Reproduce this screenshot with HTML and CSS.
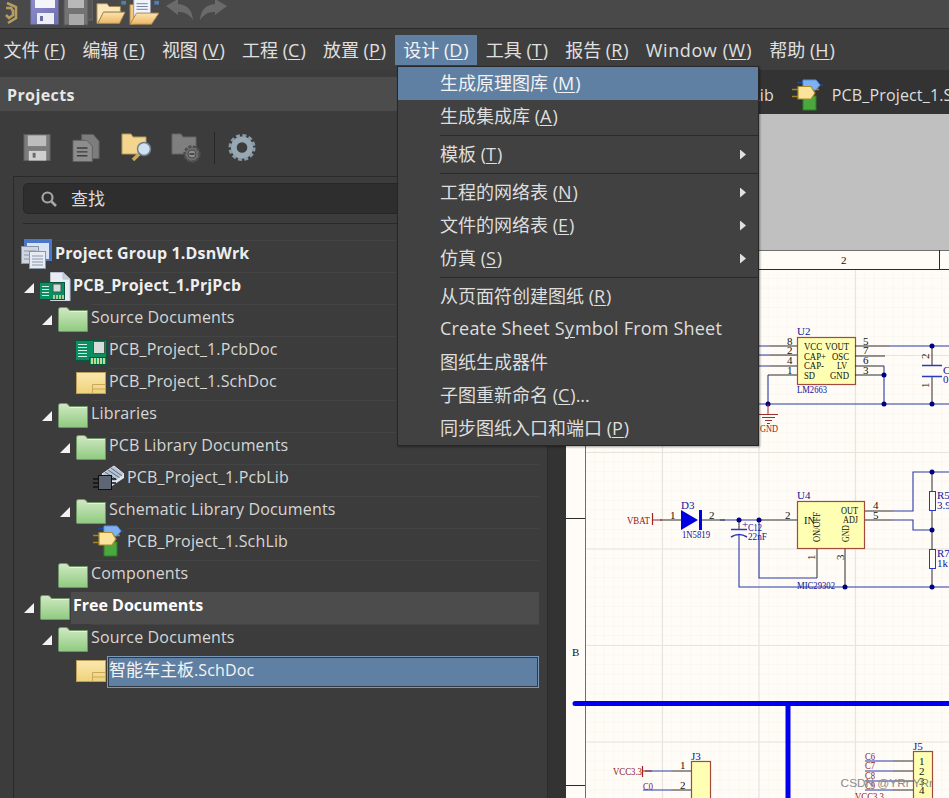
FILE: index.html
```html
<!DOCTYPE html>
<html lang="zh">
<head>
<meta charset="utf-8">
<title>Altium Designer</title>
<link rel="stylesheet" href="styles.css">
</head>
<body>
<svg class="defs" aria-hidden="true">
  <defs>
    <linearGradient id="gFolder" x1="0" y1="0" x2="0" y2="1"><stop offset="0" stop-color="#d2e8c4"/><stop offset="1" stop-color="#8ecb80"/></linearGradient>
    <linearGradient id="gSch" x1="0" y1="0" x2="0" y2="1"><stop offset="0" stop-color="#f9e8ae"/><stop offset="1" stop-color="#efd27a"/></linearGradient>
    <linearGradient id="gOpen" x1="0" y1="0" x2="0" y2="1"><stop offset="0" stop-color="#fbe3ad"/><stop offset="1" stop-color="#eeb766"/></linearGradient>
    <linearGradient id="gDisk" x1="0" y1="0" x2="1" y2="1"><stop offset="0" stop-color="#8f8fd0"/><stop offset="1" stop-color="#6f6fb0"/></linearGradient>
    <symbol id="i-folder" viewBox="0 0 32 32">
      <path d="M1.5 8.5 Q1.5 6.5 3.5 6.5 H9 Q11 6.5 12.5 9.5 H30.5 V30.5 H2.5 Q1.5 30.5 1.5 29.5 Z" fill="url(#gFolder)" stroke="#6f9566" stroke-width="1"/>
      <path d="M12.5 10.5 H30" stroke="#e6f3dc" stroke-width="1"/>
    </symbol>
    <symbol id="i-sch" viewBox="0 0 32 32">
      <rect x="1.5" y="7.5" width="29" height="21" fill="url(#gSch)" stroke="#bd9f5c"/>
      <path d="M17.5 28.5 V19.5 H30.5 M17.5 24 H30.5" fill="none" stroke="#c9a75c"/>
    </symbol>
    <symbol id="i-pcb" viewBox="0 0 32 32">
      <rect x="0.5" y="7.5" width="31" height="20" fill="#0a8f62" stroke="#06563c"/>
      <path d="M3 11.5 H12 M3 14.5 H12 M3 17.5 H12 M3 20.5 H12 M3 23.5 H12" stroke="#d6efe4" stroke-width="1.2"/>
      <rect x="18.5" y="8.5" width="11" height="12" fill="#d8dcd8" stroke="#41594f"/>
      <rect x="14.5" y="24.5" width="17" height="7" fill="#0a8f62" stroke="#06563c"/>
      <path d="M17 25 V31 M20 25 V31 M23 25 V31 M26 25 V31 M29 25 V31" stroke="#f3e9a8" stroke-width="1.6"/>
    </symbol>
    <symbol id="i-project" viewBox="0 0 32 32">
      <path d="M11.5 3.5 H24 L31 10 V32 H11.5 Z" fill="#e8ecf5" stroke="#b9c0cf"/>
      <path d="M24 3.5 V10 H31" fill="#c5cbd9" stroke="#b9c0cf"/>
      <rect x="0.5" y="13.5" width="25" height="17" fill="#0a8f62" stroke="#06563c"/>
      <path d="M3 17.5 H10 M3 20.5 H10 M3 23.5 H10 M3 26.5 H10" stroke="#d6efe4"/>
      <rect x="14" y="15" width="8" height="8" fill="#d8dcd8" stroke="#41594f"/>
      <path d="M15 26 V30 M18 26 V30 M21 26 V30 M24 26 V30" stroke="#f3e9a8" stroke-width="1.4"/>
    </symbol>
    <symbol id="i-group" viewBox="0 0 32 32">
      <rect x="3" y="2" width="28" height="22" fill="#4a78c8"/>
      <rect x="6" y="6" width="22" height="16" fill="#d9e3f3"/>
      <rect x="0.5" y="9.5" width="17" height="17" fill="#cfd6e2" stroke="#8895aa"/>
      <path d="M3 14 H15 M3 18 H15 M3 22 H15" stroke="#8b97ab"/>
      <rect x="8.5" y="14.5" width="16" height="17" fill="#e7ebf2" stroke="#8895aa"/>
      <path d="M11 19 H22 M11 22 H22 M11 25 H22 M11 28 H22" stroke="#8b97ab"/>
    </symbol>
    <symbol id="i-pcblib" viewBox="0 0 32 32">
      <path d="M9 13 L21 5 L31 13 L21 21 Z" fill="#b7c4d6" stroke="#e4e9f0"/>
      <path d="M12 11 L24 19 M15 9 L27 17 M18 7 L29 15" stroke="#5f6d80"/>
      <path d="M9 13 V18 L19 25 L31 17 V13 L21 21 Z" fill="#e3e8ee"/>
      <rect x="5.5" y="14.5" width="13" height="14" fill="#5d6672" stroke="#111"/>
      <path d="M0 18 H5 M0 22 H5 M0 26 H5 M19 18 H23 M19 22 H23" stroke="#111" stroke-width="1.4"/>
    </symbol>
    <symbol id="i-schlib" viewBox="0 0 32 32">
      <rect x="11" y="17" width="13" height="14" fill="#4aa83e" stroke="#2f7d28"/>
      <path d="M5 3.5 H24 M26 6 H31" stroke="#1a4aa5" stroke-width="1.4"/>
      <path d="M11 1 H24 L28 6 L24 11 H11 Z" fill="#7fb2f5" stroke="#5d8fd6"/>
      <path d="M0 10.5 H6 M0 17.5 H6 M24 10.5 H27" stroke="#a08420" stroke-width="1.6"/>
      <path d="M6 7.5 H19 L23 14 L19 20 H6 Z" fill="#fbe39c" stroke="#a98c2c" stroke-width="1.2"/>
    </symbol>
  </defs>
</svg>

<div class="app">
  <div class="toolbar">
    <svg class="tb-icon tb-logo" viewBox="0 0 16 28"><path d="M4 3 L13 7 V18 L5 23 M3 8 H8 L10 11 V15 L6 18 L3 15" fill="none" stroke="#b59d62" stroke-width="2.6"/></svg>
    <svg class="tb-icon tb-wide" viewBox="0 0 30 28"><rect x="1" y="-4" width="27" height="28" fill="url(#gDisk)" stroke="#7a7ab8"/><rect x="5" y="-4" width="20" height="12" fill="#f4f4fb"/><rect x="7" y="13" width="17" height="11" fill="#eeeef6"/><rect x="10" y="16" width="3" height="5" fill="#6d6da0"/></svg>
    <svg class="tb-icon tb-wide" viewBox="0 0 30 28"><rect x="7" y="-6" width="23" height="26" fill="#565656" stroke="#6c6c6c"/><rect x="1" y="-2" width="24" height="27" fill="#737373" stroke="#575757"/><rect x="5" y="-2" width="16" height="10" fill="#b8b8b8"/><rect x="6" y="14" width="15" height="11" fill="#a9a9a9"/></svg>
    <svg class="tb-icon tb-wide" viewBox="0 0 32 28"><path d="M1 3 H12 L14 6 H26 V12 H8 L2 24 H1 Z" fill="#fbe7b8" stroke="#a18a5a"/><path d="M8 12 H31 L25 24 H2 Z" fill="url(#gOpen)" stroke="#a18a5a"/><rect x="27" y="0" width="5" height="4" fill="#4f81ad"/></svg>
    <svg class="tb-icon tb-wide" viewBox="0 0 32 28"><path d="M1 4 H6 V25 H1 Z" fill="#f3c885" stroke="#a5824c"/><rect x="5" y="-3" width="18" height="22" fill="#f0f3fa" stroke="#8c96aa"/><path d="M8 3 H20 M8 6 H20 M8 9 H20" stroke="#6f7f9f"/><path d="M8 13 H32 L24 25 H1 Z" fill="url(#gOpen)" stroke="#a5824c"/><rect x="27" y="0" width="5" height="4" fill="#4f81ad"/></svg>
    <svg class="tb-icon tb-wide tb-undo" viewBox="0 0 30 28"><path d="M1 6 L13 -1 V4 Q27 5 28 20 Q22 11 13 12 V15 Z" fill="#6a6a6a"/></svg>
    <svg class="tb-icon tb-wide" viewBox="0 0 30 28"><path d="M29 6 L17 -1 V4 Q3 5 2 20 Q8 11 17 12 V15 Z" fill="#6a6a6a"/></svg>
  </div>

  <nav class="menubar">
    <span class="menu-top">文件 (<u>F</u>)</span>
    <span class="menu-top">编辑 (<u>E</u>)</span>
    <span class="menu-top">视图 (<u>V</u>)</span>
    <span class="menu-top">工程 (<u>C</u>)</span>
    <span class="menu-top">放置 (<u>P</u>)</span>
    <span class="menu-top is-open">设计 (<u>D</u>)</span>
    <span class="menu-top">工具 (<u>T</u>)</span>
    <span class="menu-top">报告 (<u>R</u>)</span>
    <span class="menu-top menu-latin">Window (<u>W</u>)</span>
    <span class="menu-top">帮助 (<u>H</u>)</span>
  </nav>

  <div class="main">
    <aside class="panel">
      <header class="panel-head">Projects</header>
      <div class="panel-tools">
        <svg class="pt-icon" viewBox="0 0 30 30"><rect x="1" y="1" width="27" height="27" fill="#7b7b7b" stroke="#5f5f5f"/><rect x="5" y="2" width="19" height="11" fill="#bdbdbd"/><rect x="6" y="18" width="18" height="10" fill="#d0d0d0"/><rect x="10" y="20" width="3" height="5" fill="#6a6a6a"/></svg>
        <svg class="pt-icon" viewBox="0 0 30 30"><path d="M10 1 H22 L28 8 V26 H10 Z" fill="#7d7d7d" stroke="#5f5f5f"/><path d="M1 7 H15 L21 13 V29 H1 Z" fill="#8d8d8d" stroke="#5f5f5f"/><path d="M5 15 H16 M5 19 H16 M5 23 H16" stroke="#3e3e3e" stroke-width="1.5"/></svg>
        <svg class="pt-icon pt-wide" viewBox="0 0 32 30"><path d="M1 1 H10 L12 4 H25 V21 H1 Z" fill="#f3d58d" stroke="#b49a5e"/><path d="M12 27 L18 21" stroke="#c7a860" stroke-width="3.5"/><circle cx="23" cy="16" r="6.5" fill="#cfe1f0" stroke="#6d7f8f" stroke-width="1.5"/></svg>
        <svg class="pt-icon pt-wide" viewBox="0 0 32 30"><path d="M1 1 H10 L12 4 H25 V21 H1 Z" fill="#7f7f7f" stroke="#646464"/><circle cx="21" cy="21" r="7.5" fill="#6d6d6d" stroke="#4e4e4e" stroke-width="2.5" stroke-dasharray="3 1.5"/><circle cx="21" cy="21" r="4" fill="#8e8e8e" stroke="#4a4a4a"/><path d="M18.5 21 H23.5" stroke="#333" stroke-width="1.5"/></svg>
        <span class="pt-sep"></span>
        <svg class="pt-icon" viewBox="0 0 30 30"><circle cx="14.5" cy="14.5" r="8.5" fill="none" stroke="#97a8b5" stroke-width="6"/><circle cx="14.5" cy="14.5" r="12.5" fill="none" stroke="#8b9aa6" stroke-width="3" stroke-dasharray="4 2.55"/></svg>
      </div>
      <div class="frame">
        <div class="search">
          <svg class="search-icon" viewBox="0 0 18 18"><circle cx="7.5" cy="7.5" r="5" fill="none" stroke="#a6a6a6" stroke-width="2.2"/><path d="M11.5 11.5 L16 16" stroke="#a6a6a6" stroke-width="2.6"/></svg>
          <span>查找</span>
        </div>
        <div class="rule"></div>
        <ul class="tree">
          <li class="row lv0"><svg class="icon"><use href="#i-group"/></svg><span class="label bold">Project Group 1.DsnWrk</span></li>
          <li class="row lv1"><i class="tri"></i><svg class="icon"><use href="#i-project"/></svg><span class="label bold">PCB_Project_1.PrjPcb</span></li>
          <li class="row lv2"><i class="tri"></i><svg class="icon"><use href="#i-folder"/></svg><span class="label">Source Documents</span></li>
          <li class="row lv3"><i class="tri-gap"></i><svg class="icon"><use href="#i-pcb"/></svg><span class="label">PCB_Project_1.PcbDoc</span></li>
          <li class="row lv3"><i class="tri-gap"></i><svg class="icon"><use href="#i-sch"/></svg><span class="label">PCB_Project_1.SchDoc</span></li>
          <li class="row lv2"><i class="tri"></i><svg class="icon"><use href="#i-folder"/></svg><span class="label">Libraries</span></li>
          <li class="row lv3"><i class="tri"></i><svg class="icon"><use href="#i-folder"/></svg><span class="label">PCB Library Documents</span></li>
          <li class="row lv4"><i class="tri-gap"></i><svg class="icon"><use href="#i-pcblib"/></svg><span class="label">PCB_Project_1.PcbLib</span></li>
          <li class="row lv3"><i class="tri"></i><svg class="icon"><use href="#i-folder"/></svg><span class="label">Schematic Library Documents</span></li>
          <li class="row lv4"><i class="tri-gap"></i><svg class="icon"><use href="#i-schlib"/></svg><span class="label">PCB_Project_1.SchLib</span></li>
          <li class="row lv2"><i class="tri-gap"></i><svg class="icon"><use href="#i-folder"/></svg><span class="label">Components</span></li>
          <li class="row lv1"><i class="tri"></i><svg class="icon"><use href="#i-folder"/></svg><span class="label bold hover">Free Documents</span></li>
          <li class="row lv2"><i class="tri"></i><svg class="icon"><use href="#i-folder"/></svg><span class="label">Source Documents</span></li>
          <li class="row lv3"><i class="tri-gap"></i><svg class="icon"><use href="#i-sch"/></svg><span class="label selected"><span class="cjk">智能车主板</span>.SchDoc</span></li>
        </ul>
      </div>
    </aside>

    <section class="doc">
      <div class="tabs">
        <span class="tab"><svg class="tab-icon"><use href="#i-pcblib"/></svg>PCB_Project_1.PcbLib</span>
        <span class="tab"><svg class="tab-icon"><use href="#i-schlib"/></svg>PCB_Project_1.SchDoc</span>
      </div>
      <div class="outside"></div>
      <svg class="sheet" viewBox="566 250 383 548">
        <defs>
          <pattern id="fine" x="566" y="250" width="9.65" height="9.65" patternUnits="userSpaceOnUse"><path d="M9.65 0 V9.65 H0" fill="none" stroke="#f6f3ec" stroke-width="1"/></pattern>
        </defs>
        <rect x="566" y="250" width="383" height="548" fill="#fffcf7"/>
        <rect x="586" y="270" width="363" height="528" fill="url(#fine)"/>
        <g stroke="#e6e4dd" stroke-width="1.2">
          <path d="M662.5 270 V798 M759 270 V798 M855.5 270 V798 M586 355.5 H949 M586 452.5 H949 M586 549 H949 M586 645.5 H949 M586 742 H949"/>
        </g>
        <g stroke="#6f6f6f" stroke-width="1">
          <path d="M566 250.5 H949 M585.5 270 V798"/>
        </g>
        <path d="M566 269.5 H949 M939.5 250 V270 M566 518.5 H585 M566 785.5 H585" stroke="#2a2a2a" stroke-width="1"/>
        <text class="s-txt s-black" x="841" y="264">2</text>
        <text class="s-txt s-black" x="572" y="656">B</text>

        <!-- U2 -->
        <g class="wire"><path d="M759 346 H770 M759 355 H770 M759 366 H770 M890 346 H949 M884 366 V404 M759 404 H949 M768 375 V404"/></g>
        <rect x="797.5" y="337.5" width="58" height="47" class="part"/>
        <g class="pin"><path d="M770 346 H797 M770 355 H797 M770 366 H797 M768 375 H797 M855 346 H890 M855 356 H885 M855 366 H884 M855 375 H884 M932 346 V365 M932 376 V404"/></g>
        <g class="s-txt s-black">
          <text x="804" y="350" textLength="18" lengthAdjust="spacingAndGlyphs">VCC</text><text x="825" y="350" textLength="24" lengthAdjust="spacingAndGlyphs">VOUT</text>
          <text x="804" y="360" textLength="22" lengthAdjust="spacingAndGlyphs">CAP+</text><text x="832" y="360" textLength="17" lengthAdjust="spacingAndGlyphs">OSC</text>
          <text x="804" y="369" textLength="20" lengthAdjust="spacingAndGlyphs">CAP-</text><text x="837" y="369" textLength="10" lengthAdjust="spacingAndGlyphs">LV</text>
          <text x="804" y="379" textLength="11" lengthAdjust="spacingAndGlyphs">SD</text><text x="830" y="379" textLength="19" lengthAdjust="spacingAndGlyphs">GND</text>
          <text x="787" y="345">8</text><text x="787" y="354">2</text><text x="787" y="364">4</text><text x="787" y="374">1</text>
          <text x="863" y="345">5</text><text x="863" y="354">7</text><text x="863" y="364">6</text><text x="863" y="374">3</text>
          <text transform="translate(929 359) rotate(-90)">2</text>
          <text transform="translate(929 388) rotate(-90)">1</text>
        </g>
        <text class="s-txt s-blue" x="797" y="335">U2</text>
        <text class="s-txt s-blue" x="797" y="393" textLength="30" lengthAdjust="spacingAndGlyphs">LM2663</text>
        <path d="M922 365.5 H942 M922 376.5 H942" stroke="#2a3ac0" stroke-width="1.4"/>
        <text class="s-txt s-blue" x="943" y="374">C</text><text class="s-txt s-blue" x="943" y="383">0.</text>
        <g class="dot"><circle cx="932" cy="346" r="2.5"/><circle cx="884" cy="375" r="2.5"/><circle cx="884" cy="404" r="2.5"/><circle cx="768" cy="404" r="2.5"/><circle cx="932" cy="404" r="2.5"/></g>
        <path d="M768 404 V414 M759 414.5 H778 M762 417.5 H775 M765 420.5 H772 M767 423.5 H770" stroke="#a03030" stroke-width="1"/>
        <text class="s-txt s-red" x="760" y="432" textLength="18" lengthAdjust="spacingAndGlyphs">GND</text>

        <!-- U4 -->
        <g class="wire"><path d="M720 520 H760 M739 535 V587 H949 M759 520 V578 H817 M893 511 H913 V472 H949 M893 520 H913 V530 H932"/></g>
        <rect x="797.5" y="501.5" width="67" height="47" class="part"/>
        <g class="pin"><path d="M660 520 H681 M701 520 H725 M760 520 H797 M739 520 V529 M817 549 V578 M845 549 V587 M865 511 H893 M865 520 H893 M932 472 V491 M932 510 V549 M932 568 V587"/></g>
        <path d="M652.5 513 V525 M652 520 H662" stroke="#a02020" stroke-width="1.2"/>
        <text class="s-txt s-red" x="627" y="524" textLength="23" lengthAdjust="spacingAndGlyphs">VBAT</text>
        <path d="M681 510 L698 520 L681 530 Z M699 510 H702 V530 H699 Z" fill="#0000e0"/>
        <text class="s-txt s-blue" x="681" y="509">D3</text>
        <text class="s-txt s-blue" x="682" y="538" textLength="28" lengthAdjust="spacingAndGlyphs">1N5819</text>
        <path d="M731 529.5 H747" stroke="#2a3ac0" stroke-width="1.5"/>
        <path d="M731 537 Q739 532 747 537" stroke="#2a3ac0" stroke-width="1.5" fill="none"/>
        <text class="s-txt s-blue" x="742" y="528">+</text>
        <text class="s-txt s-blue" x="748" y="531" textLength="14" lengthAdjust="spacingAndGlyphs">C12</text>
        <text class="s-txt s-blue" x="748" y="540" textLength="19" lengthAdjust="spacingAndGlyphs">22nF</text>
        <g class="s-txt s-black">
          <text x="670" y="519">1</text><text x="709" y="519">2</text><text x="785" y="519">2</text>
          <text x="804" y="524" textLength="11" lengthAdjust="spacingAndGlyphs">IN</text><text x="841" y="514" textLength="17" lengthAdjust="spacingAndGlyphs">OUT</text><text x="843" y="523" textLength="15" lengthAdjust="spacingAndGlyphs">ADJ</text>
          <text x="873" y="509">4</text><text x="873" y="519">5</text>
          <text transform="translate(820 542) rotate(-90)" textLength="30" lengthAdjust="spacingAndGlyphs">ON/OFF</text>
          <text transform="translate(849 542) rotate(-90)" textLength="17" lengthAdjust="spacingAndGlyphs">GND</text>
          <text transform="translate(815 560) rotate(-90)">1</text>
          <text transform="translate(844 560) rotate(-90)">3</text>
        </g>
        <text class="s-txt s-blue" x="797" y="499">U4</text>
        <text class="s-txt s-blue" x="797" y="589" textLength="38" lengthAdjust="spacingAndGlyphs">MIC29302</text>
        <rect x="929.5" y="491.5" width="6" height="19" fill="none" stroke="#2a3ac0"/>
        <rect x="929.5" y="549.5" width="6" height="19" fill="none" stroke="#2a3ac0"/>
        <text class="s-txt s-blue" x="937" y="499">R5</text><text class="s-txt s-blue" x="937" y="509">3.91</text>
        <text class="s-txt s-blue" x="937" y="557">R7</text><text class="s-txt s-blue" x="937" y="567">1k</text>
        <g class="dot"><circle cx="739" cy="520" r="2.5"/><circle cx="759" cy="520" r="2.5"/><circle cx="845" cy="587" r="2.5"/><circle cx="932" cy="587" r="2.5"/><circle cx="932" cy="472" r="2.5"/><circle cx="932" cy="530" r="2.5"/></g>

        <!-- bus -->
        <path d="M575 703.5 H949 M788 703.5 V798" stroke="#0000ee" stroke-width="5" stroke-linecap="round"/>

        <!-- J3 / J5 -->
        <rect x="691.5" y="761.5" width="19" height="60" class="part"/>
        <rect x="913.5" y="751.5" width="19" height="60" class="part"/>
        <g class="wire"><path d="M645 771 H672 M643 790 H672 M865 761 H893 M865 771 H893 M865 781 H893 M865 790 H893"/></g>
        <g class="pin"><path d="M672 771 H691 M672 790 H691 M893 761 H913 M893 771 H913 M893 781 H913 M893 790 H913"/></g>
        <path d="M642.5 766 V777 M642 771 H652" stroke="#a02020" stroke-width="1.2"/>
        <text class="s-txt s-blue" x="691" y="760">J3</text>
        <text class="s-txt s-blue" x="913" y="750">J5</text>
        <text class="s-txt s-red" x="613" y="775" textLength="29" lengthAdjust="spacingAndGlyphs">VCC3.3</text>
        <text class="s-txt s-red" x="643" y="790" textLength="10" lengthAdjust="spacingAndGlyphs">C0</text>
        <g class="s-txt s-red"><text x="865" y="760" textLength="10" lengthAdjust="spacingAndGlyphs">C6</text><text x="865" y="769" textLength="10" lengthAdjust="spacingAndGlyphs">C7</text><text x="865" y="779" textLength="10" lengthAdjust="spacingAndGlyphs">C8</text><text x="865" y="789" textLength="10" lengthAdjust="spacingAndGlyphs">C9</text><text x="855" y="800" textLength="29" lengthAdjust="spacingAndGlyphs">VCC3.3</text></g>
        <g class="s-txt s-black"><text x="919" y="765">1</text><text x="919" y="775">2</text><text x="919" y="785">3</text><text x="919" y="794">4</text><text x="680" y="769">1</text><text x="680" y="789">2</text></g>
      </svg>
      <span class="watermark">CSDN @YRr YRr</span>
    </section>
  </div>

  <div class="dropdown">
    <div class="item active"><span>生成原理图库 (<u>M</u>)</span></div>
    <div class="item"><span>生成集成库 (<u>A</u>)</span></div>
    <div class="sep"></div>
    <div class="item sub"><span>模板 (<u>T</u>)</span><i class="arrow"></i></div>
    <div class="sep"></div>
    <div class="item sub"><span>工程的网络表 (<u>N</u>)</span><i class="arrow"></i></div>
    <div class="item sub"><span>文件的网络表 (<u>E</u>)</span><i class="arrow"></i></div>
    <div class="item sub"><span>仿真 (<u>S</u>)</span><i class="arrow"></i></div>
    <div class="sep"></div>
    <div class="item"><span>从页面符创建图纸 (<u>R</u>)</span></div>
    <div class="item latin"><span>Create Sheet S<u>y</u>mbol From Sheet</span></div>
    <div class="item"><span>图纸生成器件</span></div>
    <div class="item"><span>子图重新命名 (<u>C</u>)...</span></div>
    <div class="item"><span>同步图纸入口和端口 (<u>P</u>)</span></div>
  </div>
</div>
</body>
</html>
```

FILE: styles.css
```css
* { box-sizing: border-box; }
html, body { margin: 0; height: 100%; overflow: hidden; background: #3a3a3a; }
body { font-family: "Open Sans", "Noto Sans CJK SC", sans-serif; color: #e4e4e4; }
.defs { display: block; width: 0; height: 0; }
u { text-underline-offset: 2px; text-decoration-thickness: 1px; letter-spacing: 1px; }

.app { position: relative; display: flex; flex-direction: column; height: 798px; overflow: hidden; }

.toolbar { flex: none; height: 29px; display: flex; align-items: flex-start; gap: 3px; padding-left: 3px; background: #494949; border-bottom: 1px solid #2c2c2c; overflow: hidden; }
.tb-icon { flex: none; height: 28px; display: block; }
.tb-logo { width: 16px; margin-right: 8px; }
.tb-wide { width: 30px; }
.tb-undo { margin-left: 3px; }

.menubar { flex: none; height: 41px; display: flex; align-items: center; margin-left: -5px; background: #3e3e3e; font-size: 18px; color: #e0e0e0; white-space: nowrap; }
.menu-top { height: 30px; line-height: 30px; padding: 0 8.6px; }
.menu-latin { letter-spacing: .6px; }
.menu-top.is-open { background: #5f80a3; color: #f4f4f4; }

.main { flex: 1; min-height: 0; display: flex; background: #333; }
.panel { flex: none; width: 548px; padding-top: 7px; display: flex; flex-direction: column; background: #3c3c3c; border-right: 1px solid #2b2b2b; background-clip: padding-box; }
.panel-head { flex: none; height: 34px; line-height: 36px; padding-left: 7px; background: #4c4c4c; font-size: 16px; font-weight: 700; letter-spacing: .4px; color: #e6e6e6; }
.panel-tools { flex: none; height: 65px; display: flex; align-items: center; padding-left: 23px; padding-top: 8px; }
.pt-icon { flex: none; width: 29px; height: 30px; margin-right: 20px; }
.pt-wide { width: 32px; margin-right: 18px; }
.pt-sep { flex: none; width: 1px; height: 32px; background: #262626; margin: 0 13px 0 -7px; }

.frame { flex: 1; min-height: 0; margin-left: 13px; border-left: 1px solid #2a2a2a; border-top: 1px solid #2a2a2a; padding: 6px 0 0; }
.search { height: 31px; margin: 0 8px 0 9px; display: flex; align-items: center; gap: 13px; padding: 0 0 3px 16px; background: #2e2e2e; border: 1px solid #262626; border-radius: 5px; font-size: 17px; color: #dcdcdc; }
.search-icon { width: 18px; height: 18px; margin-top: 3px; }
.rule { height: 1px; margin: 9px 0 0 9px; background: #2a2a2a; }

.tree { list-style: none; margin: 13px 8px 0 0; padding: 0; font-size: 16px; letter-spacing: .15px; color: #d6d6d6; }
.row { display: flex; height: 32px; align-items: flex-start; }
.lv0 { padding-left: 7px; }
.lv1 { padding-left: 10px; }
.lv2 { padding-left: 28px; }
.lv3 { padding-left: 46px; }
.lv4 { padding-left: 64px; }
.tri { flex: none; width: 10px; height: 10px; margin: 14px 5px 0 0; background: #f2f2f2; clip-path: polygon(100% 0, 100% 100%, 0 100%); }
.tri-gap { flex: none; width: 15px; height: 1px; }
.icon { flex: none; width: 32px; height: 32px; margin-right: 2px; }
.label { flex: 1; min-width: 0; height: 32px; margin-top: 3px; line-height: 25px; border-top: 1px solid #444; white-space: nowrap; }
.bold { font-weight: 700; color: #eeeeee; }
.hover { background: #4c4c4c; color: #fff; margin-left: -2px; padding-left: 2px; border-top-color: #4c4c4c; letter-spacing: 0; }
.selected { background: #5f80a3; color: #f4f4f4; margin-left: -2px; padding-left: 1px; border: 1px solid #7d98b6; outline: 1px solid #2f3a45; outline-offset: -2px; }
.cjk { font-size: 17px; letter-spacing: 0; }

.doc { flex: 1; min-width: 0; display: flex; flex-direction: column; position: relative; padding-left: 18px; }
.tabs { flex: none; height: 44px; margin-left: -18px; display: flex; align-items: center; gap: 18px; padding: 6px 0 0 24px; background: #333; font-size: 16px; letter-spacing: .15px; color: #dedede; white-space: nowrap; overflow: hidden; }
.tab { display: flex; align-items: center; gap: 8px; }
.tab-icon { flex: none; width: 32px; height: 32px; }
.outside { flex: none; height: 136px; background: #c0c0c0; }
.sheet { flex: 1; min-height: 0; display: block; width: 383px; }
.watermark { position: absolute; right: 16px; bottom: 8px; font-family: "Liberation Sans", sans-serif; font-size: 11.8px; color: #8a8a8a; }

.part { fill: #ffffb4; stroke: #a4493d; stroke-width: 1.2; }
.wire { fill: none; stroke: #2a3aa8; stroke-width: 1.1; }
.pin { fill: none; stroke: #2e2e2e; stroke-width: 1; }
.dot { fill: #000080; }
.s-txt { font-family: "Liberation Serif", serif; font-size: 11px; }
.s-black { fill: #111; }
.s-blue { fill: #12129a; }
.s-red { fill: #8f1414; }

.dropdown { position: absolute; left: 397px; top: 66px; width: 362px; background: #414141; border: 1px solid #272727; font-size: 18px; color: #dedede; box-shadow: 1px 1px 2px rgba(0,0,0,.4); }
.item { height: 33px; display: flex; align-items: center; justify-content: space-between; padding: 0 12px 4px 42px; white-space: nowrap; }
.item.latin { letter-spacing: .2px; }
.item.active { background: #5f80a3; color: #f2f2f2; }
.sep { height: 5px; padding-top: 2px; margin-left: 42px; }
.sep::before { content: ""; display: block; height: 1px; background: #2a2a2a; }
.arrow { width: 6px; height: 10px; margin-top: 4px; background: #e0e0e0; clip-path: polygon(0 0, 100% 50%, 0 100%); }
```
